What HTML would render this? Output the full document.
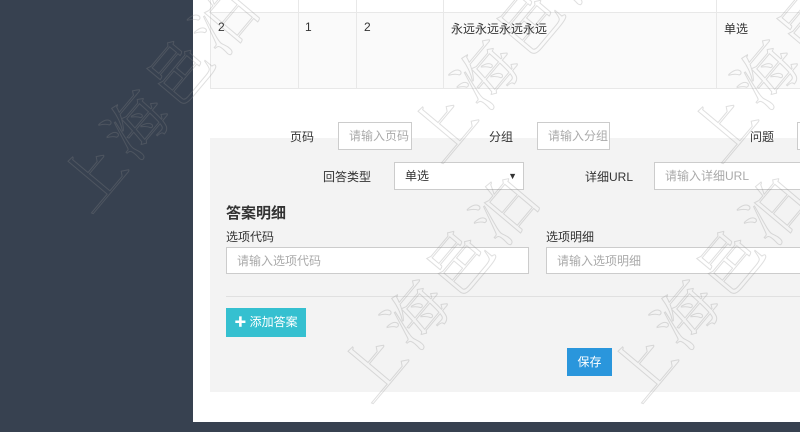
<!DOCTYPE html>
<html style="width:800px;height:432px;overflow:hidden"><head><meta charset="utf-8"><style>
*{box-sizing:border-box;margin:0;padding:0}
body{width:800px;height:432px;overflow:hidden;position:relative;background:#fff;font-family:"Liberation Sans","Noto Sans CJK SC",sans-serif;font-size:12px;color:#333}
.side{position:absolute;left:0;top:0;width:193px;height:432px;background:#374150}
.bot{position:absolute;left:0;top:422px;width:800px;height:10px;background:#374150}
.abs{position:absolute}
.row{position:absolute;left:210px;top:12px;width:590px;height:77px;background:#fafafa;border-top:1px solid #e8e8e8;border-bottom:1px solid #e8e8e8}
.row0{position:absolute;left:210px;top:0;width:590px;height:12px;background:#fff}
.vl{position:absolute;top:0;height:89px;width:1px;background:#e8e8e8}
.panel{position:absolute;left:210px;top:138px;width:590px;height:254px;background:#f3f3f3}
.in{position:absolute;background:#fff;border:1px solid #ccc;color:#aaa;padding-left:10px;line-height:26px;height:28px;overflow:hidden;white-space:nowrap}
.lbl{position:absolute;color:#333}
svg.wm{position:absolute;left:0;top:0;width:800px;height:432px}
</style></head><body>
<div class="side"></div>
<div class="row0"></div>
<div class="row"></div>
<div class="vl" style="left:210px"></div><div class="vl" style="left:298px"></div><div class="vl" style="left:356px"></div><div class="vl" style="left:443px"></div><div class="vl" style="left:716px"></div>
<div class="lbl" style="left:218px;top:20px">2</div>
<div class="lbl" style="left:305px;top:20px">1</div>
<div class="lbl" style="left:364px;top:20px">2</div>
<div class="lbl" style="left:451px;top:20px">永远永远永远永远</div>
<div class="lbl" style="left:724px;top:20px">单选</div>
<div class="panel"></div>
<div class="lbl" style="left:290px;top:128px">页码</div>
<div class="in" style="left:338px;top:122px;width:74px">请输入页码</div>
<div class="lbl" style="left:489px;top:128px">分组</div>
<div class="in" style="left:537px;top:122px;width:73px">请输入分组</div>
<div class="lbl" style="left:750px;top:128px">问题</div>
<div class="in" style="left:797px;top:122px;width:3px;padding:0;border-right:none"></div>
<div class="lbl" style="left:323px;top:168px">回答类型</div>
<div class="in" style="left:394px;top:162px;width:130px;color:#333">单选<span style="position:absolute;right:6px;font-size:9px">▼</span></div>
<div class="lbl" style="left:585px;top:168px">详细URL</div>
<div class="in" style="left:654px;top:162px;width:146px;border-right:none">请输入详细URL</div>
<div class="lbl" style="left:226px;top:202px;font-size:15px;font-weight:bold;color:#333">答案明细</div>
<div class="lbl" style="left:226px;top:228px">选项代码</div>
<div class="in" style="left:226px;top:247px;width:303px;height:27px">请输入选项代码</div>
<div class="lbl" style="left:546px;top:228px">选项明细</div>
<div class="in" style="left:546px;top:247px;width:254px;height:27px;border-right:none">请输入选项明细</div>
<div class="abs" style="left:226px;top:296px;width:574px;height:1px;background:#e0e0e0"></div>
<div class="abs" style="left:226px;top:308px;width:80px;height:29px;background:#35c0d0;color:#fff;line-height:29px;text-align:center;font-size:12px">✚ 添加答案</div>
<div class="abs" style="left:567px;top:348px;width:45px;height:28px;background:#2a96dc;color:#fff;line-height:28px;text-align:center">保存</div>
<div class="bot"></div>
<svg class="wm" viewBox="0 0 800 432" xmlns="http://www.w3.org/2000/svg" overflow="hidden">
<g font-family="Noto Serif CJK SC, serif" font-size="62" letter-spacing="6" fill="none" stroke="rgba(140,140,140,0.28)" stroke-width="1">
<text transform="translate(90,215) rotate(-50)">上海邑泊</text>
<text transform="translate(370,405) rotate(-50)">上海邑泊</text>
<text transform="translate(640,405) rotate(-50)">上海邑泊</text>
<text transform="translate(440,165) rotate(-50)">上海邑泊</text>
<text transform="translate(720,165) rotate(-50)">上海邑泊</text>
</g>
</svg>
</body></html>
